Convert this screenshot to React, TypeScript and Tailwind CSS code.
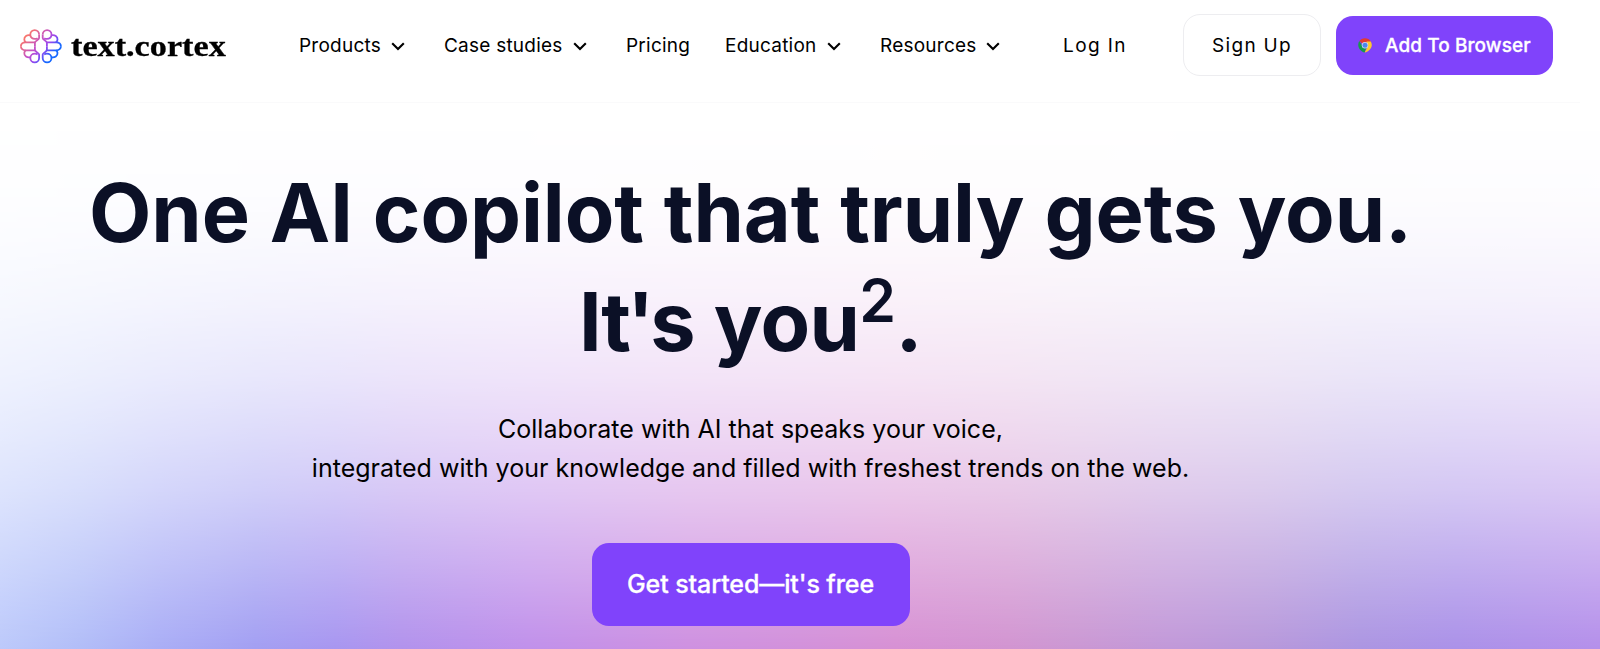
import React from 'react';

interface NavItemProps {
  label: string;
  className: string;
  hasMenu?: boolean;
}

const Chevron = () => (
  <svg width="14" height="9" viewBox="0 0 14 9" fill="none" className="mt-px">
    <path d="M1.2 1.2 7 7l5.8-5.8" stroke="#000" strokeWidth="2.1" />
  </svg>
);

const NavItem: React.FC<NavItemProps> = ({ label, className, hasMenu = true }) => (
  <a href="#" className={`flex shrink-0 items-center justify-between whitespace-nowrap ${className}`}>
    {label}
    {hasMenu && <Chevron />}
  </a>
);

// Upper left quarter of the mark, mirrored for the other three
const Petals = () => (
  <>
    <path d="M19.1 5.6a4.400 4.400 0 0 0-8.800 0c0 2.600 2 4.300 4.600 4.300 1 0 1.900-.2 2.700-.7" />
    <path d="M19.1 5.600V9c0 2.200-4.200 2.200-4.200 5v3.300" />
    <path d="M10.400 6.400C7 5.600 4 7.600 4.300 10.700c.1 1.300.7 2.100 1.700 2.600" />
    <path d="M15 13.300H5.500C2.600 13.300.9 15 .9 17.300" />
  </>
);

const LogoMark = () => (
  <svg width="42" height="35" viewBox="0 0 42 35" fill="none">
    <defs>
      <linearGradient id="mark-fill" x1="6" y1="4" x2="36" y2="30" gradientUnits="userSpaceOnUse">
        <stop offset="0" stopColor="#ff7a60" />
        <stop offset="0.45" stopColor="#bd4fd0" />
        <stop offset="0.62" stopColor="#9248f0" />
        <stop offset="0.85" stopColor="#1668ff" />
      </linearGradient>
      <mask id="mark-shape" maskUnits="userSpaceOnUse" x="0" y="0" width="42" height="35">
        <g stroke="#fff" strokeWidth="1.8">
          <Petals />
          <g transform="translate(0 34.6) scale(1 -1)"><Petals /></g>
          <g transform="translate(41.8 0) scale(-1 1)"><Petals /></g>
          <g transform="translate(41.8 34.6) scale(-1 -1)"><Petals /></g>
        </g>
      </mask>
    </defs>
    <rect width="42" height="35" fill="url(#mark-fill)" mask="url(#mark-shape)" />
  </svg>
);

const ChromeIcon = () => (
  <svg width="14" height="15" viewBox="0 0 14 15">
    <path d="M1.300 3.100C2.600 1.200 4.600.2 7 .2s4.600 1.100 5.800 3.200L7 7.500z" fill="#e33b2e" />
    <path d="M1.300 3.100C-.2 5.400-.1 8.700 1.700 11.200c1.400 2 3.400 3.200 5 3.400L8.500 9 4 7.600z" fill="#159a4b" />
    <path d="M12.800 3.400H8.500l1.700 4-3.500 7.200c3-.3 7-3.600 7.100-7.500 0-1.400-.4-2.700-1-3.700z" fill="#fdc92f" />
    <circle cx="7" cy="7.200" r="3.200" fill="#d5dcf5" />
    <circle cx="7" cy="7.200" r="2.500" fill="#4b86ee" />
  </svg>
);

export default function App() {
  return (
    <div className="relative isolate h-[649px] w-full overflow-hidden bg-white font-['Inter',sans-serif] text-black">
      {/* Gradient backdrop */}
      <div className="absolute inset-0 -z-10 bg-[linear-gradient(to_right,#bbc8fb_0%,#b0bcf8_5%,#a8acf6_10%,#a19df2_16%,#a694f0_21%,#b090ec_25%,#bf8eea_33%,#cd8ee0_43%,#d18eda_50%,#d68ed3_56%,#d192d0_63%,#ca95d2_67%,#c096d8_73%,#b696da_79%,#aa93e1_85%,#a98fe8_91%,#b38dea_100%)] [mask-image:linear-gradient(to_bottom,transparent_17%,rgba(0,0,0,0.025)_30%,rgba(0,0,0,0.06)_37%,rgba(0,0,0,0.12)_46%,rgba(0,0,0,0.24)_58%,rgba(0,0,0,0.36)_67%,rgba(0,0,0,0.5)_76%,rgba(0,0,0,0.7)_86%,rgba(0,0,0,0.98)_100%)]" />

      <header className="flex h-[103px] w-[1580px] items-start border-b border-[#fafafb] bg-white pl-5">
        <a href="#" className="mt-[29px] flex w-[279px] items-center gap-[9px]">
          <LogoMark />
          <span className="origin-left scale-x-[1.14] pb-[2px] font-['Liberation_Serif',serif] text-[30px] leading-[33px] font-bold [-webkit-text-stroke:0.3px_#000]">
            text.cortex
          </span>
        </a>
        <nav className="mt-[31px] flex h-[29px] text-[19px] leading-[29px] tracking-[0.23px]">
          <NavItem label="Products" className="w-[106px]" />
          <NavItem label="Case studies" className="ml-[39px] w-[143px]" />
          <NavItem label="Pricing" className="ml-[39px] w-[64px]" hasMenu={false} />
          <NavItem label="Education" className="ml-[35px] w-[116px]" />
          <NavItem label="Resources" className="ml-[39px] w-[120px]" />
        </nav>
        <a href="#" className="mt-[31px] ml-[63px] w-[120px] text-[19px] leading-[29px] tracking-[1.4px]">
          Log In
        </a>
        <a
          href="#"
          className="mt-[14px] flex h-[62px] w-[138px] items-center justify-center rounded-[17px] border border-[#ededf0] pt-[2px] text-[19px] tracking-[1.3px]"
        >
          Sign Up
        </a>
        <a
          href="#"
          className="mt-4 ml-[15px] flex h-[59px] w-[217px] items-center gap-[13px] rounded-[17px] bg-[#8043fb] pl-[22px] text-[19px] font-medium tracking-[0.09px] text-white [-webkit-text-stroke:0.3px_#fff]"
        >
          <ChromeIcon />
          <span className="pt-px">Add To Browser</span>
        </a>
      </header>

      <main className="flex w-[1501px] flex-col items-center text-center">
        <h1 className="mt-[56px] text-[81px] leading-[109px] font-bold text-[#0b1026]">
          <span className="tracking-[-0.1px] [word-spacing:0.9px]">One AI copilot that truly gets you.</span>
          <br />
          <span className="tracking-[-0.6px]">
            I<span className="tracking-[-4px]">t'</span>s you<sup className="text-[59px] font-semibold">2</sup>.
          </span>
        </h1>
        <p className="mt-[33px] text-[25px] leading-[39px] tracking-[0.02px]">
          Collaborate with AI that speaks your voice,
          <br />
          integrated with your knowledge and filled with freshest trends on the web.
        </p>
        <button className="mt-[55px] h-[83px] w-[318px] rounded-[17px] bg-[#8043fb] text-[25px] font-medium tracking-[-0.1px] text-white [-webkit-text-stroke:0.3px_#fff]">
          Get started—it's free
        </button>
      </main>
    </div>
  );
}
